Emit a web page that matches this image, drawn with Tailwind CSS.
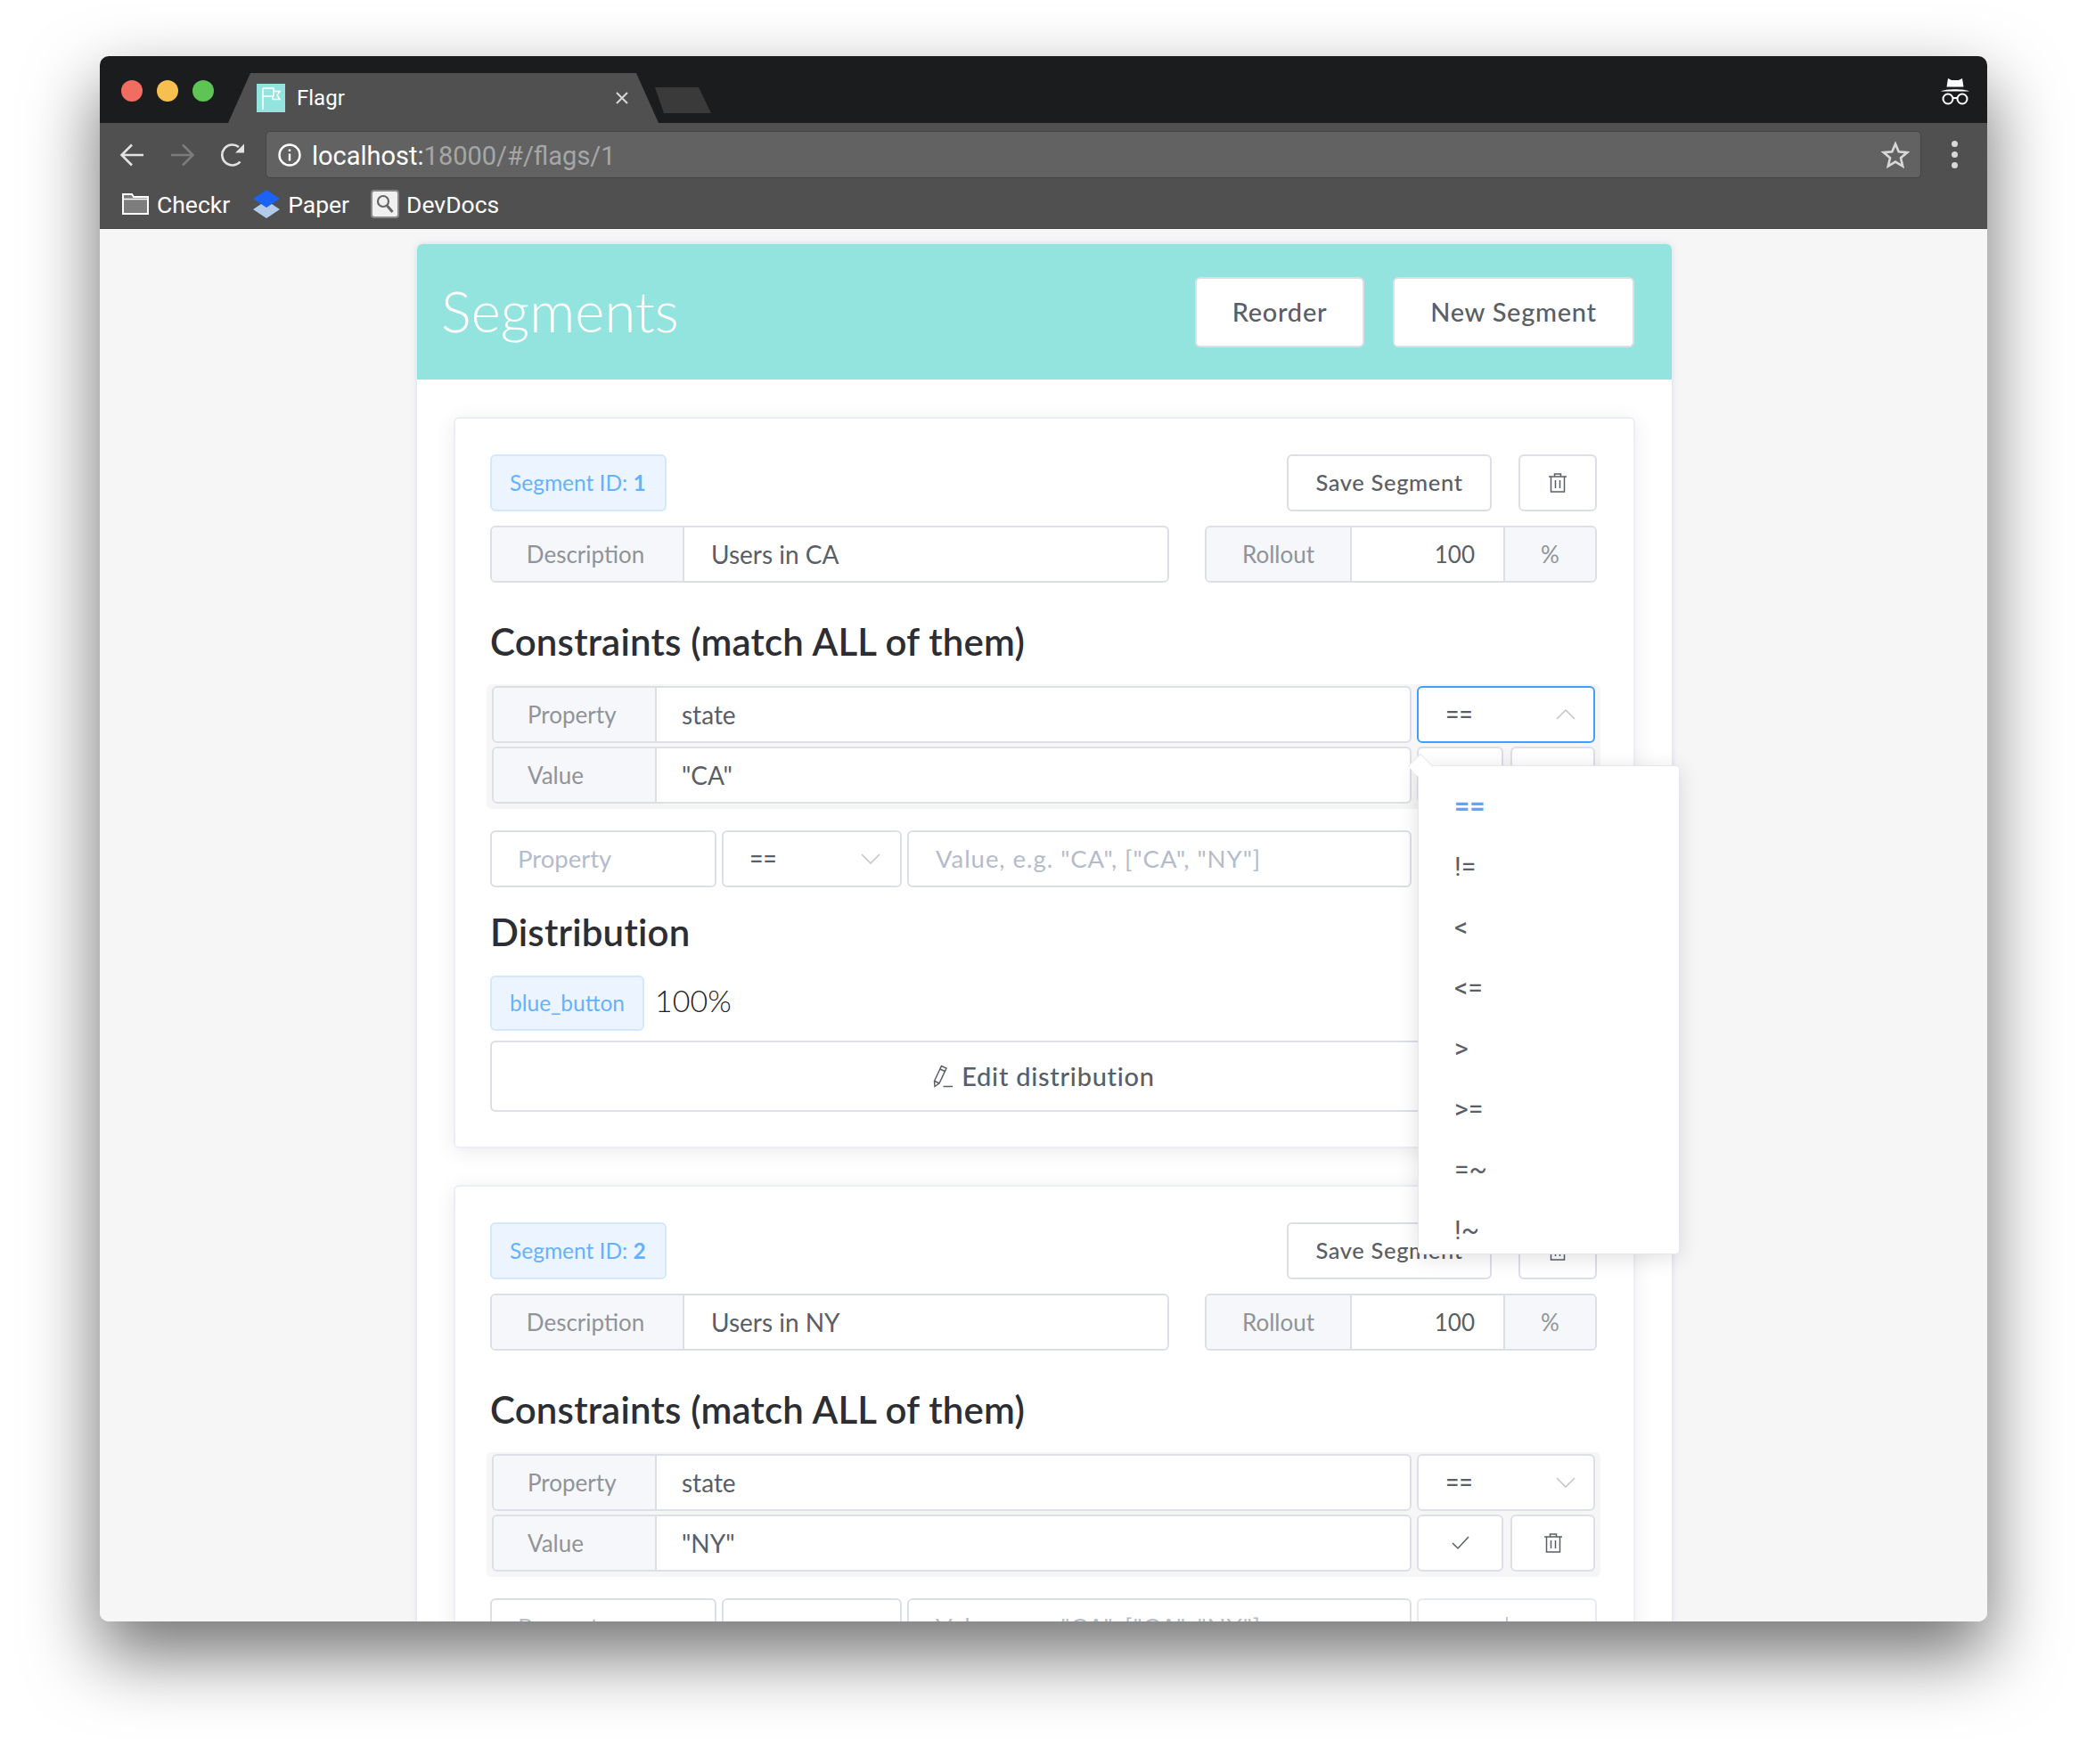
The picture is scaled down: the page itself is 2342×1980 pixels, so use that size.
<!DOCTYPE html>
<html lang="en">
<head>
    <meta charset="UTF-8">
    <title>Flagr</title>
    <script src="https://cdn.jsdelivr.net/npm/@tailwindcss/browser@4"></script>
</head>
<body class="bg-white h-[1980px] overflow-hidden pt-[63px] pl-[112px] font-['Lato',sans-serif]">
    <!-- Browser window -->
    <div class="w-[2118px] h-[1757px] rounded-[10px] flex flex-col overflow-hidden shadow-[0_36px_80px_2px_rgba(0,0,0,0.55)]">
        <!-- Tab strip -->
        <div class="h-[75px] shrink-0 bg-[#1b1c1e] flex items-end">
            <div class="flex gap-4 ml-6 self-start mt-[27px]">
                <span class="w-6 h-6 rounded-full bg-[#f26d61]"></span>
                <span class="w-6 h-6 rounded-full bg-[#f8bf4e]"></span>
                <span class="w-6 h-6 rounded-full bg-[#5ec453]"></span>
            </div>
            <div class="ml-4 w-[483px] h-[56px] bg-[#505050] [clip-path:polygon(0_100%,25px_0,458px_0,483px_100%)] flex items-center pl-8 pr-[34px] font-['Roboto',sans-serif]">
                <div class="w-8 h-8 bg-[#93e3de] flex items-center justify-center">
                    <svg width="26" height="28" viewBox="0 0 26 28" fill="none" stroke="#fff" stroke-width="1.5"><path d="M4 27V3M4 3h12v3.500h7l-3 4.500 3 4.500h-8v-3.500H4"/><path d="M16 6.500v6"/></svg>
                </div>
                <span class="ml-[13px] text-[24px] text-white">Flagr</span>
                <svg class="ml-auto" width="14" height="14" viewBox="0 0 14 14" stroke="#d8d8d8" stroke-width="2"><path d="M1 1l12 12M13 1L1 13"/></svg>
            </div>
            <div class="-ml-1 self-start mt-[35px] w-[63px] h-[29px] bg-[#3a3a3a] [clip-path:polygon(0_0,49px_0,63px_100%,10px_100%)]"></div>
            <svg class="ml-auto mr-[18px] self-start mt-[24px]" width="36" height="32" viewBox="0 0 36 32" fill="#fff"><path d="M10 1l4 2h8l4-2 1.500 9.500h-19zM2 15.500c5-3 27-3 32 0z"/><g fill="none" stroke="#fff" stroke-width="2"><circle cx="10" cy="24" r="5.500"/><circle cx="26" cy="24" r="5.500"/><path d="M15.500 23h5"/></g></svg>
        </div>

        <!-- Toolbar -->
        <div class="h-[119px] shrink-0 bg-[#505050] border-b border-[#444] pt-[9px] font-['Roboto',sans-serif]">
            <div class="flex items-center h-[53px]">
                <div class="ml-[18px] w-9 h-9 flex items-center justify-center">
                    <svg width="28" height="26" viewBox="0 0 28 26" fill="none" stroke="#e2e2e2" stroke-width="2.600"><path d="M27 13H3M14 1.500L2.500 13 14 24.500"/></svg>
                </div>
                <div class="ml-[21px] w-9 h-9 flex items-center justify-center">
                    <svg width="28" height="26" viewBox="0 0 28 26" fill="none" stroke="#7c7c7c" stroke-width="2.600"><path d="M1 13h24M14 1.500L25.500 13 14 24.500"/></svg>
                </div>
                <div class="ml-5 w-9 h-9 flex items-center justify-center">
                    <svg width="28" height="28" viewBox="0 0 28 28" fill="none" stroke="#e2e2e2" stroke-width="2.600"><path d="M22.500 21.500A11.500 11.500 0 1 1 21 5"/><path d="M27 1.500V11.500H17z" fill="#e2e2e2" stroke="none"/></svg>
                </div>
                <div class="ml-[19px] w-[1858px] h-[53px] bg-[#626262] border border-[#444] rounded-[5px] flex items-center pl-[13px] pr-3">
                    <svg width="26" height="26" viewBox="0 0 26 26" fill="none" stroke="#fff" stroke-width="2.400"><circle cx="13" cy="13" r="11.500"/><path d="M13 11.500v8M13 6.500v2.500"/></svg>
                    <span class="ml-3 pt-[3px] text-[29px] leading-none text-white">localhost:<span class="text-[#a6a6a6]">18000/#/flags/1</span></span>
                    <svg class="ml-auto" width="32" height="32" viewBox="0 0 32 32" fill="none" stroke="#d8d8d8" stroke-width="2.600"><path d="M16 3.500l3.700 8.800 9.500.8-7.200 6.200 2.200 9.300L16 23.600l-8.200 5 2.200-9.300-7.200-6.200 9.500-.8z"/></svg>
                </div>
                <div class="ml-[34px] flex flex-col gap-[5px]">
                    <span class="w-[7px] h-[7px] rounded-full bg-[#d8d8d8]"></span>
                    <span class="w-[7px] h-[7px] rounded-full bg-[#d8d8d8]"></span>
                    <span class="w-[7px] h-[7px] rounded-full bg-[#d8d8d8]"></span>
                </div>
            </div>
            <!-- Bookmarks -->
            <div class="mt-[13px] h-8 pl-[25px] flex items-center text-[26.5px] text-white">
                <svg width="30" height="24" viewBox="0 0 30 24"><path d="M1 23V1h10l2 3h16v19z" fill="#7d7d7d" stroke="#fff" stroke-width="2"/><path d="M1 6.500h28" stroke="#fff" stroke-width="1.500"/></svg>
                <span class="ml-[9px] pt-[1px]">Checkr</span>
                <svg class="ml-[26px]" width="30" height="32" viewBox="0 0 30 32"><path d="M15 12L30 22 15 32 0 22z" fill="#b1cbe8"/><path d="M15 0L30 10 15 20 0 10z" fill="#1b62f5"/></svg>
                <span class="ml-[9px] pt-[1px]">Paper</span>
                <svg class="ml-6" width="32" height="32" viewBox="0 0 32 32" fill="none"><rect x="1" y="1" width="30" height="30" rx="3" fill="#f0f0f0" stroke="#888" stroke-width="2"/><circle cx="14" cy="13" r="6" stroke="#666" stroke-width="2.200"/><path d="M18.500 18l6 7" stroke="#666" stroke-width="3"/></svg>
                <span class="ml-2 pt-[1px]">DevDocs</span>
            </div>
        </div>

        <!-- Page -->
        <div class="relative flex-1 bg-[#f6f6f6] overflow-hidden">
            <div class="ml-[356px] mt-[17px] w-[1408px] bg-white rounded-t-md shadow-[0_0_6px_rgba(180,190,220,0.5)]">
                <div class="h-[152px] bg-[#93e3de] rounded-t-md flex items-center pl-[27px] pr-[42px]">
                    <h1 class="text-[63.500px] font-light text-white pb-[3px]">Segments</h1>
                    <button class="ml-auto w-[190px] h-[79px] bg-white border-2 border-[#dcdfe6] rounded-md text-[29px] font-medium text-[#5a5e66] tracking-wide">Reorder</button>
                    <button class="ml-8 w-[271px] h-[79px] bg-white border-2 border-[#dcdfe6] rounded-md text-[29px] font-medium text-[#5a5e66] tracking-wide">New Segment</button>
                </div>

                <div class="px-[41px] pt-[42px] flex flex-col gap-[41px]">
                    <!-- Segment 1 -->
                    <div class="h-[821px] border-2 border-[#ebeef5] rounded-md pl-[39px] pr-[41px] pt-10 shadow-[0_4px_24px_rgba(0,0,0,0.08)]">
                        <div class="flex items-center h-16">
                            <div class="w-[198px] h-16 pl-5 flex items-center bg-[#ecf5ff] border-2 border-[#d3e7ff] rounded-md text-[24.500px] text-[#66b1ff]">Segment ID:&nbsp;<b>1</b></div>
                            <button class="ml-auto w-[230px] h-16 pb-[2px] border-2 border-[#dcdfe6] rounded-md text-[25.500px] font-medium text-[#5a5e66] tracking-wide">Save Segment</button>
                            <button class="ml-[30px] w-[88px] h-16 border-2 border-[#dcdfe6] rounded-md flex items-center justify-center">
                                <svg width="20" height="22" viewBox="0 0 20 22" fill="none" stroke="#5a5e66" stroke-width="1.500"><path d="M0 4h20M6.500 4V1h7v3M2.500 4v17h15V4M7.500 8v9M12.500 8v9"/></svg>
                            </button>
                        </div>
                        <div class="mt-4 flex h-16 text-[26px]">
                            <div class="w-[762px] flex border-2 border-[#dcdfe6] rounded-md overflow-hidden">
                                <div class="w-[216px] bg-[#f5f7fa] border-r-2 border-[#dcdfe6] text-[#909399] flex items-center justify-center pr-1">Description</div>
                                <div class="flex-1 pl-[30px] flex items-center text-[28px] text-[#5a5e66]">Users in CA</div>
                            </div>
                            <div class="ml-auto w-[440px] flex border-2 border-[#dcdfe6] rounded-md overflow-hidden">
                                <div class="w-[163px] bg-[#f5f7fa] border-r-2 border-[#dcdfe6] text-[#909399] flex items-center justify-center">Rollout</div>
                                <div class="w-[170px] pr-8 flex items-center justify-end text-[#5a5e66]">100</div>
                                <div class="flex-1 bg-[#f5f7fa] border-l-2 border-[#dcdfe6] text-[#909399] flex items-center justify-center">%</div>
                            </div>
                        </div>
                        <h2 class="mt-[43px] h-[46px] text-[42px] leading-[46px] tracking-[0.2px] font-semibold text-[#2c2e33]">Constraints (match ALL of them)</h2>
                        <div class="mt-[25px] -ml-1 w-[1250px] h-[140px] bg-[#f6f6f7] rounded-md pt-[2px] pl-[6px] text-[26px]">
                            <div class="flex h-16">
                                <div class="w-[1032px] flex border-2 border-[#dcdfe6] rounded-md overflow-hidden bg-white">
                                    <div class="w-[183px] bg-[#f5f7fa] border-r-2 border-[#dcdfe6] text-[#909399] flex items-center pl-[38px]">Property</div>
                                    <div class="flex-1 pl-7 flex items-center text-[28px] text-[#5a5e66]">state</div>
                                </div>
                                <div class="ml-[6px] w-[200px] border-2 border-[#409eff] rounded-md bg-white flex items-center pl-[30px] pr-5 text-[#5a5e66] font-['Roboto',sans-serif] text-[28px]">
                                    ==
                                    <svg class="ml-auto" width="22" height="12" viewBox="0 0 22 12" fill="none" stroke="#c0c4cc" stroke-width="1.500"><path d="M1 11L11 1l10 10"/></svg>
                                </div>
                            </div>
                            <div class="mt-1 flex h-16">
                                <div class="w-[1032px] flex border-2 border-[#dcdfe6] rounded-md overflow-hidden bg-white">
                                    <div class="w-[183px] bg-[#f5f7fa] border-r-2 border-[#dcdfe6] text-[#909399] flex items-center pl-[38px]">Value</div>
                                    <div class="flex-1 pl-7 flex items-center text-[28px] text-[#5a5e66]">"CA"</div>
                                </div>
                                <div class="ml-[6px] w-[97px] border-2 border-[#dcdfe6] rounded-md bg-white"></div>
                                <div class="ml-2 w-[95px] border-2 border-[#dcdfe6] rounded-md bg-white"></div>
                            </div>
                        </div>
                        <div class="mt-6 flex h-16 text-[27.500px]">
                            <div class="w-[254px] border-2 border-[#dcdfe6] rounded-md pl-[29px] flex items-center text-[#b4bccc]">Property</div>
                            <div class="ml-[6px] w-[202px] border-2 border-[#dcdfe6] rounded-md flex items-center pl-[29px] pr-[22px] text-[#5a5e66] font-['Roboto',sans-serif] text-[28px]">
                                ==
                                <svg class="ml-auto" width="22" height="12" viewBox="0 0 22 12" fill="none" stroke="#c0c4cc" stroke-width="1.500"><path d="M1 1l10 10L21 1"/></svg>
                            </div>
                            <div class="ml-[6px] w-[566px] border-2 border-[#dcdfe6] rounded-md pl-[30px] flex items-center text-[#b4bccc] tracking-[0.95px]">Value, e.g. "CA", ["CA", "NY"]</div>
                        </div>
                        <h2 class="mt-[27px] h-[46px] text-[42px] leading-[46px] tracking-[0.2px] font-semibold text-[#2c2e33]">Distribution</h2>
                        <div class="mt-[26px] flex items-center h-[62px]">
                            <div class="w-[173px] h-[62px] pl-[20px] flex items-center bg-[#ecf5ff] border-2 border-[#d3e7ff] rounded-md text-[24.500px] text-[#66b1ff]">blue_button</div>
                            <span class="ml-3 mb-2 text-[34px] font-light text-[#1f2024]">100%</span>
                        </div>
                        <button class="mt-[11px] w-full h-[80px] border-2 border-[#dcdfe6] rounded-md flex items-center justify-center gap-[9px] text-[29px] font-medium text-[#5a5e66] tracking-wide">
                            <svg width="24" height="26" viewBox="0 0 24 26" fill="none" stroke="#5a5e66" stroke-width="1.500"><path d="M2.500 18.500L10.500 1.500l5.500 2.500-8 17-5 3.500zM9 5l5.500 2.500M3 18.500l5 2.500M12.500 24.500H23"/></svg>
                            Edit distribution
                        </button>
                    </div>

                    <!-- Segment 2 -->
                    <div class="h-[821px] border-2 border-[#ebeef5] rounded-md pl-[39px] pr-[41px] pt-10 shadow-[0_4px_24px_rgba(0,0,0,0.08)]">
                        <div class="flex items-center h-16">
                            <div class="w-[198px] h-16 pl-5 flex items-center bg-[#ecf5ff] border-2 border-[#d3e7ff] rounded-md text-[24.500px] text-[#66b1ff]">Segment ID:&nbsp;<b>2</b></div>
                            <button class="ml-auto w-[230px] h-16 pb-[2px] border-2 border-[#dcdfe6] rounded-md text-[25.500px] font-medium text-[#5a5e66] tracking-wide">Save Segment</button>
                            <button class="ml-[30px] w-[88px] h-16 border-2 border-[#dcdfe6] rounded-md flex items-center justify-center">
                                <svg width="20" height="22" viewBox="0 0 20 22" fill="none" stroke="#5a5e66" stroke-width="1.500"><path d="M0 4h20M6.500 4V1h7v3M2.500 4v17h15V4M7.500 8v9M12.500 8v9"/></svg>
                            </button>
                        </div>
                        <div class="mt-4 flex h-16 text-[26px]">
                            <div class="w-[762px] flex border-2 border-[#dcdfe6] rounded-md overflow-hidden">
                                <div class="w-[216px] bg-[#f5f7fa] border-r-2 border-[#dcdfe6] text-[#909399] flex items-center justify-center pr-1">Description</div>
                                <div class="flex-1 pl-[30px] flex items-center text-[28px] text-[#5a5e66]">Users in NY</div>
                            </div>
                            <div class="ml-auto w-[440px] flex border-2 border-[#dcdfe6] rounded-md overflow-hidden">
                                <div class="w-[163px] bg-[#f5f7fa] border-r-2 border-[#dcdfe6] text-[#909399] flex items-center justify-center">Rollout</div>
                                <div class="w-[170px] pr-8 flex items-center justify-end text-[#5a5e66]">100</div>
                                <div class="flex-1 bg-[#f5f7fa] border-l-2 border-[#dcdfe6] text-[#909399] flex items-center justify-center">%</div>
                            </div>
                        </div>
                        <h2 class="mt-[43px] h-[46px] text-[42px] leading-[46px] tracking-[0.2px] font-semibold text-[#2c2e33]">Constraints (match ALL of them)</h2>
                        <div class="mt-[25px] -ml-1 w-[1250px] h-[140px] bg-[#f6f6f7] rounded-md pt-[2px] pl-[6px] text-[26px]">
                            <div class="flex h-16">
                                <div class="w-[1032px] flex border-2 border-[#dcdfe6] rounded-md overflow-hidden bg-white">
                                    <div class="w-[183px] bg-[#f5f7fa] border-r-2 border-[#dcdfe6] text-[#909399] flex items-center pl-[38px]">Property</div>
                                    <div class="flex-1 pl-7 flex items-center text-[28px] text-[#5a5e66]">state</div>
                                </div>
                                <div class="ml-[6px] w-[200px] border-2 border-[#dcdfe6] rounded-md bg-white flex items-center pl-[30px] pr-5 text-[#5a5e66] font-['Roboto',sans-serif] text-[28px]">
                                    ==
                                    <svg class="ml-auto" width="22" height="12" viewBox="0 0 22 12" fill="none" stroke="#c0c4cc" stroke-width="1.500"><path d="M1 1l10 10L21 1"/></svg>
                                </div>
                            </div>
                            <div class="mt-1 flex h-16">
                                <div class="w-[1032px] flex border-2 border-[#dcdfe6] rounded-md overflow-hidden bg-white">
                                    <div class="w-[183px] bg-[#f5f7fa] border-r-2 border-[#dcdfe6] text-[#909399] flex items-center pl-[38px]">Value</div>
                                    <div class="flex-1 pl-7 flex items-center text-[28px] text-[#5a5e66]">"NY"</div>
                                </div>
                                <div class="ml-[6px] w-[97px] border-2 border-[#dcdfe6] rounded-md bg-white flex items-center justify-center">
                                    <svg width="20" height="16" viewBox="0 0 20 16" fill="none" stroke="#5a5e66" stroke-width="1.500"><path d="M1 8l6 6L19 1"/></svg>
                                </div>
                                <div class="ml-2 w-[95px] border-2 border-[#dcdfe6] rounded-md bg-white flex items-center justify-center">
                                    <svg width="20" height="22" viewBox="0 0 20 22" fill="none" stroke="#5a5e66" stroke-width="1.500"><path d="M0 4h20M6.500 4V1h7v3M2.500 4v17h15V4M7.500 8v9M12.500 8v9"/></svg>
                                </div>
                            </div>
                        </div>
                        <div class="mt-6 flex h-16 text-[27.500px]">
                            <div class="w-[254px] border-2 border-[#dcdfe6] rounded-md pl-[29px] flex items-center text-[#b4bccc]">Property</div>
                            <div class="ml-[6px] w-[202px] border-2 border-[#dcdfe6] rounded-md flex items-center pl-[29px] pr-[22px] text-[#5a5e66] font-['Roboto',sans-serif] text-[28px]">==</div>
                            <div class="ml-[6px] w-[566px] border-2 border-[#dcdfe6] rounded-md pl-[30px] flex items-center text-[#b4bccc] tracking-[0.95px]">Value, e.g. "CA", ["CA", "NY"]</div>
                            <div class="ml-[6px] w-[202px] border-2 border-[#e6e9f3] rounded-md flex items-center justify-center">
                                <svg width="22" height="22" viewBox="0 0 22 22" fill="none" stroke="#b4b8c8" stroke-width="1.500"><path d="M11 0v22M0 11h22"/></svg>
                            </div>
                        </div>
                    </div>
                </div>
            </div>

            <!-- Operator dropdown -->
            <div class="absolute left-[1479px] top-[602px] w-[294px] h-[549px] bg-white border border-[#e4e7ed] rounded-[4px] shadow-[0_4px_24px_rgba(0,0,0,0.12)] text-[30px] text-[#5a5e66] font-['Roboto',sans-serif]">
                <div class="absolute -top-[10px] left-[-8px] w-5 h-5 rotate-45 bg-white border-l border-t border-[#e4e7ed]"></div>
                <div class="relative pl-[40px] pt-[10px] overflow-hidden h-full">
                    <div class="h-[68px] flex items-center font-bold text-[#5ea6fb]">==</div>
                    <div class="h-[68px] flex items-center">!=</div>
                    <div class="h-[68px] flex items-center">&lt;</div>
                    <div class="h-[68px] flex items-center">&lt;=</div>
                    <div class="h-[68px] flex items-center">&gt;</div>
                    <div class="h-[68px] flex items-center">&gt;=</div>
                    <div class="h-[68px] flex items-center">=~</div>
                    <div class="h-[68px] flex items-center">!~</div>
                </div>
            </div>
        </div>
    </div>
</body>
</html>
